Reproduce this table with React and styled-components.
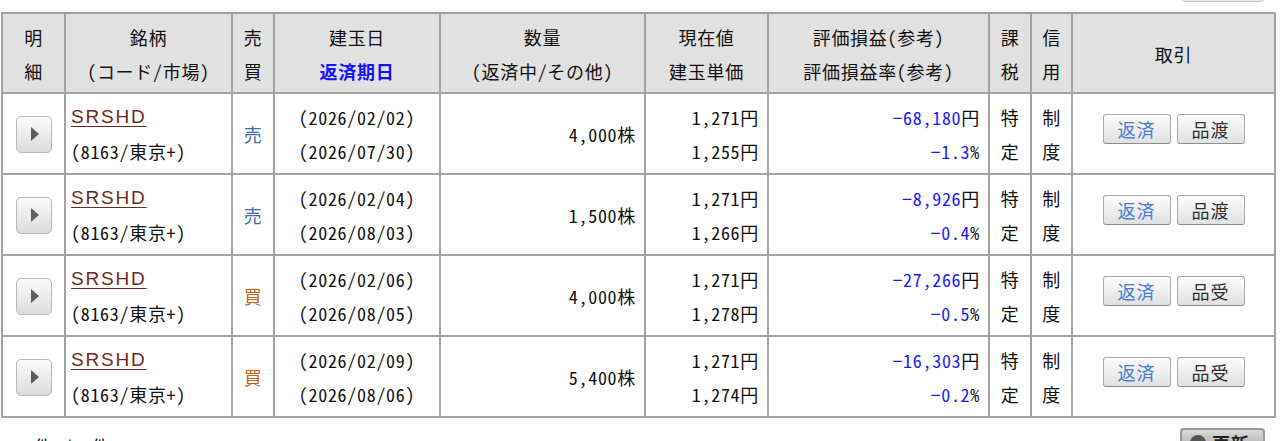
import React from "react";
import styled, { createGlobalStyle } from "styled-components";

const GlobalStyle = createGlobalStyle`
  body {
    margin: 0;
    background: #ffffff;
    font-family: "Noto Sans CJK JP", "Noto Sans", sans-serif;
    color: #111;
    overflow: hidden;
  }
`;

const Page = styled.div`
  width: 1280px;
  font-size: 18px;
  font-feature-settings: "hwid";
  letter-spacing: 0.7px;
`;

const TopBar = styled.div`
  display: flex;
  justify-content: flex-end;
  height: 26px;
  margin-top: -24px;
  padding-right: 16px;
`;

const SmallBtn = styled.div`
  width: 82px;
  height: 26px;
  box-sizing: border-box;
  border: 1px solid #c8c8c8;
  border-radius: 3px;
  background: linear-gradient(#fafafa, #e6e6e6);
`;

const Table = styled.table`
  margin: 10px 0 0 1px;
  width: 1273px;
  table-layout: fixed;
  border-collapse: collapse;
  border: 2px solid #a3a3a3;
`;

const HeadCell = styled.th`
  background: #e1e1e1;
  border: 2px solid #a3a3a3;
  font-weight: normal;
  text-align: center;
  padding: 6px 0 4px;
  line-height: 34px;
  white-space: nowrap;
  vertical-align: middle;
`;

const Cell = styled.td`
  border: 2px solid #a3a3a3;
  height: 68px;
  padding: 6px ${(p) => (p.$align === "right" ? "8px" : "0")} 5px
    ${(p) => (p.$align === "left" ? "5px" : "0")};
  text-align: ${(p) => p.$align || "center"};
  line-height: 34px;
  white-space: nowrap;
  vertical-align: middle;
`;

const Line = styled.div`
  height: 34px;
  overflow: hidden;
  color: ${(p) => p.$color || "inherit"};
  font-weight: ${(p) => (p.$bold ? 700 : 400)};
`;

const DetailButton = styled.button`
  margin: 0 auto;
  width: 36px;
  height: 37px;
  border: 1px solid #b9b9b9;
  border-radius: 5px;
  background: linear-gradient(#fbfbfb, #dcdcdc);
  padding: 0;
  display: flex;
  align-items: center;
  justify-content: center;
`;

const Triangle = styled.span`
  width: 0;
  height: 0;
  margin-left: 3px;
  border-top: 7px solid transparent;
  border-bottom: 7px solid transparent;
  border-left: 8px solid #5e5e5e;
`;

const StockLink = styled.a`
  font-family: "Liberation Sans", Arial, sans-serif;
  font-size: 19px;
  letter-spacing: 1.8px;
  line-height: 34px;
  vertical-align: top;
  color: #6e2a22;
  text-decoration: underline;
  text-underline-offset: 3px;
`;

const Side = styled.span`
  color: ${(p) => (p.$kind === "buy" ? "#c8621c" : "#3c6eab")};
`;

const Num = styled.span`
  color: #1a1aff;
`;

const TradeButton = styled.button`
  width: 68px;
  height: 30px;
  margin: 0 3px 11px;
  vertical-align: middle;
  border: 1px solid #a9a9a9;
  border-bottom-color: #8e8e8e;
  border-radius: 3px;
  background: linear-gradient(#fdfdfd, #e0e0e0);
  font-family: "Noto Sans CJK JP", sans-serif;
  font-size: 18px;
  line-height: 26px;
  padding: 0;
  letter-spacing: 1px;
  color: ${(p) => (p.$tone === "blue" ? "#4a7cd6" : "#2e2e2e")};
`;

const Footer = styled.div`
  display: flex;
  justify-content: space-between;
  align-items: flex-start;
  margin-top: 10px;
  padding: 0 15px 0 5px;
`;

const Count = styled.div`
  margin-top: 6px;
  line-height: 24px;
`;

const RefreshButton = styled.div`
  display: flex;
  align-items: center;
  gap: 6px;
  width: 85px;
  height: 30px;
  box-sizing: border-box;
  padding: 0 8px;
  border: 2px solid #9a9a9a;
  border-radius: 4px;
  background: linear-gradient(#d9d9d9, #9d9d9d);
  color: #222;
  font-weight: 700;
`;

const Icon = styled.span`
  width: 16px;
  height: 16px;
  border-radius: 50%;
  background: #555;
`;

const rows = [
  {
    side: "sell",
    open: "2026/02/02",
    due: "2026/07/30",
    qty: "4,000",
    price: "1,271",
    cost: "1,255",
    pl: "−68,180",
    rate: "−1.3",
    act: "品渡",
  },
  {
    side: "sell",
    open: "2026/02/04",
    due: "2026/08/03",
    qty: "1,500",
    price: "1,271",
    cost: "1,266",
    pl: "−8,926",
    rate: "−0.4",
    act: "品渡",
  },
  {
    side: "buy",
    open: "2026/02/06",
    due: "2026/08/05",
    qty: "4,000",
    price: "1,271",
    cost: "1,278",
    pl: "−27,266",
    rate: "−0.5",
    act: "品受",
  },
  {
    side: "buy",
    open: "2026/02/09",
    due: "2026/08/06",
    qty: "5,400",
    price: "1,271",
    cost: "1,274",
    pl: "−16,303",
    rate: "−0.2",
    act: "品受",
  },
];

const widths = [63, 167, 42, 166, 205, 123, 221, 42, 41, 203];

export default function App() {
  return (
    <Page>
      <GlobalStyle />
      <TopBar>
        <SmallBtn />
      </TopBar>
      <Table>
        <colgroup>
          {widths.map((w, i) => (
            <col key={i} style={{ width: w }} />
          ))}
        </colgroup>
        <thead>
          <tr>
            <HeadCell>
              <Line>明</Line>
              <Line>細</Line>
            </HeadCell>
            <HeadCell>
              <Line>銘柄</Line>
              <Line>（コード/市場）</Line>
            </HeadCell>
            <HeadCell>
              <Line>売</Line>
              <Line>買</Line>
            </HeadCell>
            <HeadCell>
              <Line>建玉日</Line>
              <Line $color="#1414ff" $bold>
                返済期日
              </Line>
            </HeadCell>
            <HeadCell>
              <Line>数量</Line>
              <Line>（返済中/その他）</Line>
            </HeadCell>
            <HeadCell>
              <Line>現在値</Line>
              <Line>建玉単価</Line>
            </HeadCell>
            <HeadCell>
              <Line>評価損益(参考)</Line>
              <Line>評価損益率(参考)</Line>
            </HeadCell>
            <HeadCell>
              <Line>課</Line>
              <Line>税</Line>
            </HeadCell>
            <HeadCell>
              <Line>信</Line>
              <Line>用</Line>
            </HeadCell>
            <HeadCell>取引</HeadCell>
          </tr>
        </thead>
        <tbody>
          {rows.map((r, i) => (
            <tr key={i}>
              <Cell>
                <DetailButton>
                  <Triangle />
                </DetailButton>
              </Cell>
              <Cell $align="left">
                <Line>
                  <StockLink href="#">SRSHD</StockLink>
                </Line>
                <Line>(8163/東京+)</Line>
              </Cell>
              <Cell>
                <Side $kind={r.side}>{r.side === "buy" ? "買" : "売"}</Side>
              </Cell>
              <Cell>
                <Line>({r.open})</Line>
                <Line>({r.due})</Line>
              </Cell>
              <Cell $align="right">{r.qty}株</Cell>
              <Cell $align="right">
                <Line>{r.price}円</Line>
                <Line>{r.cost}円</Line>
              </Cell>
              <Cell $align="right">
                <Line>
                  <Num>{r.pl}</Num>円
                </Line>
                <Line>
                  <Num>{r.rate}</Num>%
                </Line>
              </Cell>
              <Cell>
                <Line>特</Line>
                <Line>定</Line>
              </Cell>
              <Cell>
                <Line>制</Line>
                <Line>度</Line>
              </Cell>
              <Cell>
                <TradeButton $tone="blue">返済</TradeButton>
                <TradeButton>{r.act}</TradeButton>
              </Cell>
            </tr>
          ))}
        </tbody>
      </Table>
      <Footer>
        <Count>1-4件 / 4件</Count>
        <RefreshButton>
          <Icon />
          更新
        </RefreshButton>
      </Footer>
    </Page>
  );
}
